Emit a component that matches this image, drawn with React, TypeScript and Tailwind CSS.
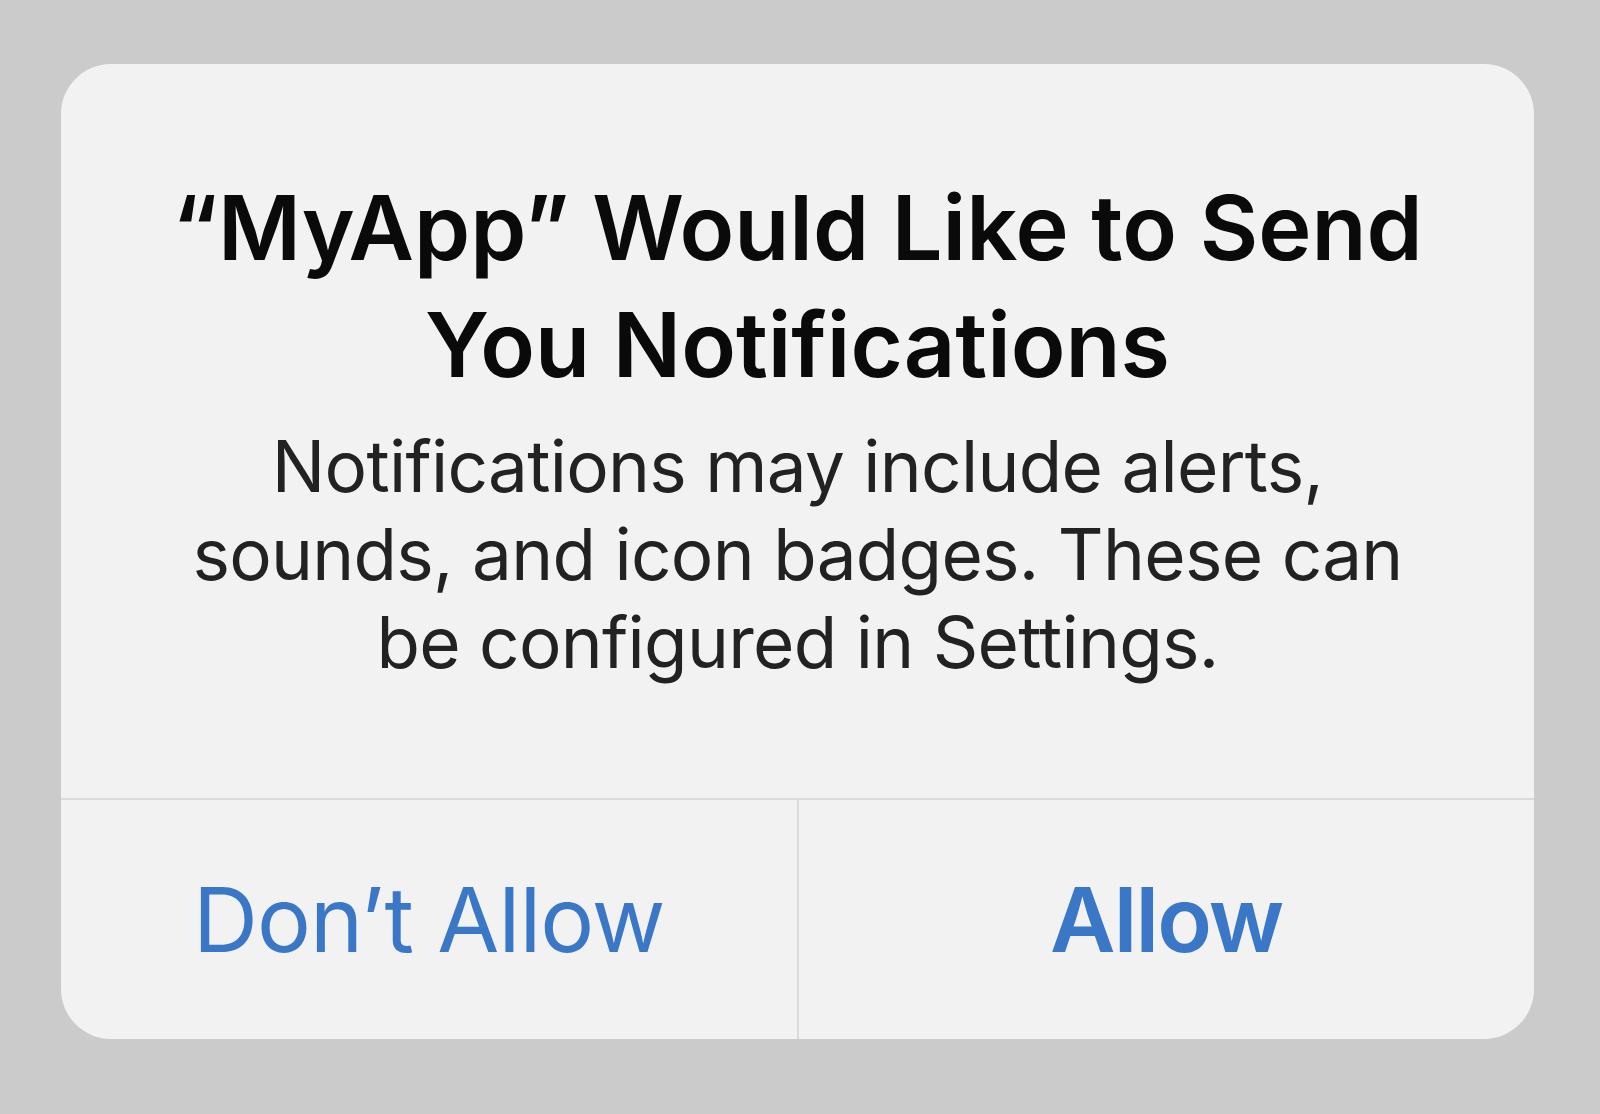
export default function App() {
  return (
    <div className="min-h-screen w-full bg-[#cbcbcb] pt-[64px] font-['Inter','Liberation_Sans',sans-serif]">
      <div className="ml-[61px] flex h-[975px] w-[1473px] flex-col overflow-hidden rounded-[50px] bg-[#f2f2f2]">
        <div className="flex h-[734px] flex-col items-center pt-[105px] text-center">
          <h1 className="text-[90px] font-semibold leading-[117px] tracking-[0em] text-[#0a0a0a]">
            “MyApp” Would Like to Send
            <br />
            You Notifications
          </h1>
          <p className="mt-[19px] text-[71px] leading-[88px] tracking-[-0.01em] text-[#222222]">
            Notifications may include alerts,
            <br />
            sounds, and icon badges. These can
            <br />
            be configured in Settings.
          </p>
        </div>
        <div className="flex flex-1 border-t-2 border-[#dadada]">
          <button className="flex flex-1 items-center justify-center text-[90px] tracking-[-0.01em] text-[#3a77c6]">
            Don’t Allow
          </button>
          <div className="w-[2px] bg-[#dadada]" />
          <button className="flex flex-1 items-center justify-center text-[90px] font-semibold tracking-[-0.02em] text-[#3a77c6]">
            Allow
          </button>
        </div>
      </div>
    </div>
  )
}
